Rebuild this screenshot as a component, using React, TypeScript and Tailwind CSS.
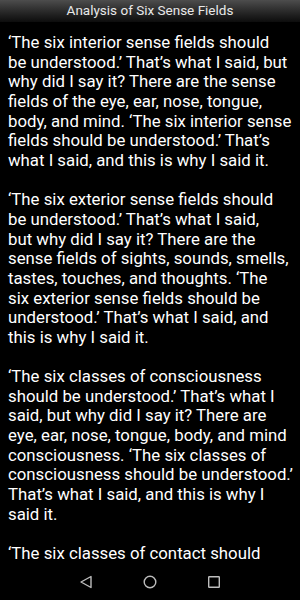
import React from "react";

const font = { fontFamily: "Roboto, 'Noto Sans', sans-serif" } as const;

// lines kept as the reader app wraps them
const PARAGRAPHS: string[][] = [
  [
    "‘The six interior sense fields should",
    "be understood.’ That’s what I said, but",
    "why did I say it? There are the sense",
    "fields of the eye, ear, nose, tongue,",
    "body, and mind. ‘The six interior sense",
    "fields should be understood.’ That’s",
    "what I said, and this is why I said it.",
  ],
  [
    "‘The six exterior sense fields should",
    "be understood.’ That’s what I said,",
    "but why did I say it? There are the",
    "sense fields of sights, sounds, smells,",
    "tastes, touches, and thoughts. ‘The",
    "six exterior sense fields should be",
    "understood.’ That’s what I said, and",
    "this is why I said it.",
  ],
  [
    "‘The six classes of consciousness",
    "should be understood.’ That’s what I",
    "said, but why did I say it? There are",
    "eye, ear, nose, tongue, body, and mind",
    "consciousness. ‘The six classes of",
    "consciousness should be understood.’",
    "That’s what I said, and this is why I",
    "said it.",
  ],
  ["‘The six classes of contact should"],
];

export default function App() {
  return (
    <div className="w-[300px] h-[600px] bg-black flex flex-col overflow-hidden" style={font}>
      {/* title bar */}
      <div className="h-[22px] shrink-0 flex items-center justify-center bg-gradient-to-b from-[#4d4d4d] to-[#0d0d0d]">
        <span className="text-[13.5px] text-[#e8e8e8] leading-none">Analysis of Six Sense Fields</span>
      </div>

      {/* text */}
      <div className="flex-1 overflow-hidden pl-2 pt-[11px]">
        {PARAGRAPHS.map((lines, i) => (
          <p key={i} className="text-[16.8px] leading-[19.65px] text-white mb-[19.65px] whitespace-nowrap">
            {lines.map((l, j) => (
              <span key={j} className="block">{l}</span>
            ))}
          </p>
        ))}
      </div>

      {/* nav bar */}
      <div className="h-[35px] shrink-0 bg-black flex items-center justify-center gap-[50px] pb-[1px]">
        <svg width="14" height="14" viewBox="0 0 14 14" fill="none">
          <path d="M12 1.5V12.5L2 7Z" stroke="#bdbdbd" strokeWidth="1.4" strokeLinejoin="round" />
        </svg>
        <svg width="14" height="14" viewBox="0 0 14 14" fill="none">
          <circle cx="7" cy="7" r="5.8" stroke="#bdbdbd" strokeWidth="1.4" />
        </svg>
        <svg width="14" height="14" viewBox="0 0 14 14" fill="none">
          <rect x="1.7" y="1.7" width="10.6" height="10.6" rx="0.5" stroke="#bdbdbd" strokeWidth="1.4" />
        </svg>
      </div>
    </div>
  );
}
